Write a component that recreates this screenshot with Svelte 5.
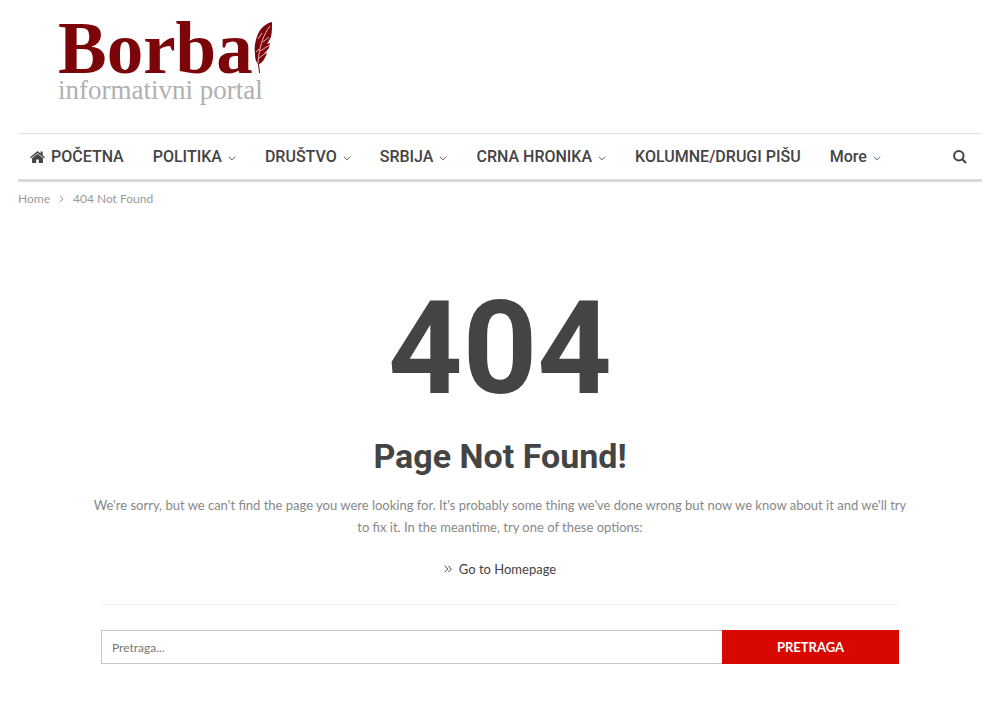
<script lang="ts">
  interface NavItem {
    label: string;
    home?: boolean;
    menu?: boolean;
  }

  const items: NavItem[] = [
    { label: 'POČETNA', home: true },
    { label: 'POLITIKA', menu: true },
    { label: 'DRUŠTVO', menu: true },
    { label: 'SRBIJA', menu: true },
    { label: 'CRNA HRONIKA', menu: true },
    { label: 'KOLUMNE/DRUGI PIŠU' },
    { label: 'More', menu: true },
  ];

  let query = $state('');
</script>

<div class="page">
  <header>
    <a class="logo" href="#home">
      <span class="brand">
        Borba
        <svg class="feather" viewBox="0 0 20 54" aria-hidden="true">
          <path d="M19 1C14 2 8 6 5 13C2 20 1 26 2 33C2 38 3 41 5 43L6 52H7L6 43C9 42 12 38 14 32L11 33L16 27L17 22L14 23L18 16C19 11 19 6 19 1Z" fill="#7b0508" />
          <path d="M17 5C11 13 6 25 5 42" class="quill" />
          <path d="M7 30L17 24M6 37L14 31M3 31L6 28M10 21L16 16M5 18L9 12" class="quill" />
        </svg>
      </span>
      <span class="tagline">informativni portal</span>
    </a>
  </header>

  <nav aria-label="Main">
    <ul>
      {#each items as item (item.label)}
        <li>
          <a href="#{item.label}">
            {#if item.home}
              <svg class="home" viewBox="0 0 16 14" aria-hidden="true">
                <path d="M8 0.5L0 7.2L1 8.4L8 2.6L15 8.4L16 7.2L13.5 5.1V1H11.3V3.2Z" />
                <path d="M8 3.6L2.2 8.4V13.5H6.6V9.6H9.4V13.5H13.8V8.4Z" />
              </svg>
            {/if}
            {item.label}
            {#if item.menu}
              <svg class="chevron" viewBox="0 0 9 7" aria-hidden="true"><path d="M1 1.5L4.5 5L8 1.5" /></svg>
            {/if}
          </a>
        </li>
      {/each}
    </ul>
    <button class="search-toggle" type="button" aria-label="Search">
      <svg viewBox="0 0 14 14" aria-hidden="true">
        <circle cx="5.8" cy="5.8" r="4.7" />
        <path d="M9.3 9.3L13 13" />
      </svg>
    </button>
  </nav>

  <div class="breadcrumb">
    <a href="#home">Home</a>
    <svg viewBox="0 0 5 8" aria-hidden="true"><path d="M0.8 0.8L4 4L0.8 7.2" /></svg>
    <span>404 Not Found</span>
  </div>

  <main>
    <div class="code">404</div>
    <h1>Page Not Found!</h1>
    <p>
      We're sorry, but we can't find the page you were looking for. It's probably some thing we've
      done wrong but now we know about it and we'll try to fix it. In the meantime, try one of these
      options:
    </p>
    <a class="back" href="#home">
      <svg viewBox="0 0 8 8" aria-hidden="true"><path d="M0.7 0.8L3.8 4L0.7 7.2M4.2 0.8L7.3 4L4.2 7.2" /></svg>
      Go to Homepage
    </a>
    <form onsubmit={(e) => e.preventDefault()}>
      <input type="search" placeholder="Pretraga..." aria-label="Pretraga" bind:value={query} />
      <button type="submit">PRETRAGA</button>
    </form>
  </main>
</div>

<style>
  :global(body) { margin: 0; background: #fff; }
  .page {
    padding: 0 18px;
    font-family: Lato, sans-serif;
    color: #444;
  }
  a { color: inherit; text-decoration: none; }
  svg { flex: none; fill: none; stroke: currentColor; }

  header { display: flex; padding: 21px 40px 30px; }
  .logo {
    display: flex;
    flex-direction: column;
    font-family: "Liberation Serif", serif;
  }
  .brand {
    display: flex;
    align-items: flex-start;
    height: 56px;
    font-size: 73px;
    line-height: 56px;
    font-weight: 700;
    color: #7b0508;
  }
  .feather { width: 20px; height: 54px; }
  .feather path { stroke: none; }
  .feather .quill { stroke: #e5b9b9; stroke-width: 1; }
  .tagline { font-size: 27px; line-height: 26px; color: #b0b0b0; }

  nav {
    display: flex;
    align-items: center;
    justify-content: space-between;
    height: 45px;
    padding: 0 15px 0 12px;
    border-top: 1px solid #dedede;
    border-bottom: 3px solid #d9d9d9;
  }
  ul { display: flex; gap: 29px; margin: 0; padding: 0; list-style: none; }
  li a {
    display: flex;
    align-items: center;
    gap: 6px;
    font: 500 16px/24px Roboto, sans-serif;
    white-space: nowrap;
  }
  .home { width: 15px; height: 14px; }
  .home path { fill: currentColor; stroke: none; }
  .chevron { width: 8px; height: 7px; margin-top: 4px; }
  .search-toggle {
    display: flex;
    padding: 0;
    border: 0;
    background: none;
    color: #444;
  }
  .search-toggle svg { width: 14px; height: 14px; stroke-width: 2; }

  .breadcrumb {
    display: flex;
    align-items: center;
    gap: 9px;
    padding-top: 8px;
    font-size: 12px;
    line-height: 18px;
    color: #999;
  }
  .breadcrumb svg { width: 5px; height: 8px; }

  main {
    display: flex;
    flex-direction: column;
    align-items: center;
    max-width: 798px;
    margin: 0 auto;
    padding-top: 76px;
    text-align: center;
  }
  .code { font: 700 130px/130px Roboto, sans-serif; }
  h1 { margin: 20px 0 0; font: 700 34px/44px Roboto, sans-serif; }
  p { margin: 16px -12px 0; font-size: 13px; line-height: 22px; color: #888; }
  .back {
    display: flex;
    align-items: center;
    gap: 7px;
    margin-top: 20px;
    font-size: 13px;
    line-height: 22px;
  }
  .back svg { width: 8px; height: 8px; }

  form {
    display: flex;
    align-self: stretch;
    margin-top: 24px;
    padding-top: 25px;
    border-top: 1px solid #f0f0f0;
  }
  input {
    flex: 1;
    box-sizing: border-box;
    min-width: 0;
    height: 34px;
    padding: 0 10px;
    border: 1px solid #c4c4c4;
    border-right: 0;
    border-radius: 0;
    appearance: none;
    font: 12px Lato, sans-serif;
    color: #444;
  }
  input::placeholder { color: #777; opacity: 1; }
  form button {
    width: 177px;
    padding: 0;
    border: 0;
    background: #d80800;
    font: 700 13px Lato, sans-serif;
    color: #fff;
  }
</style>
